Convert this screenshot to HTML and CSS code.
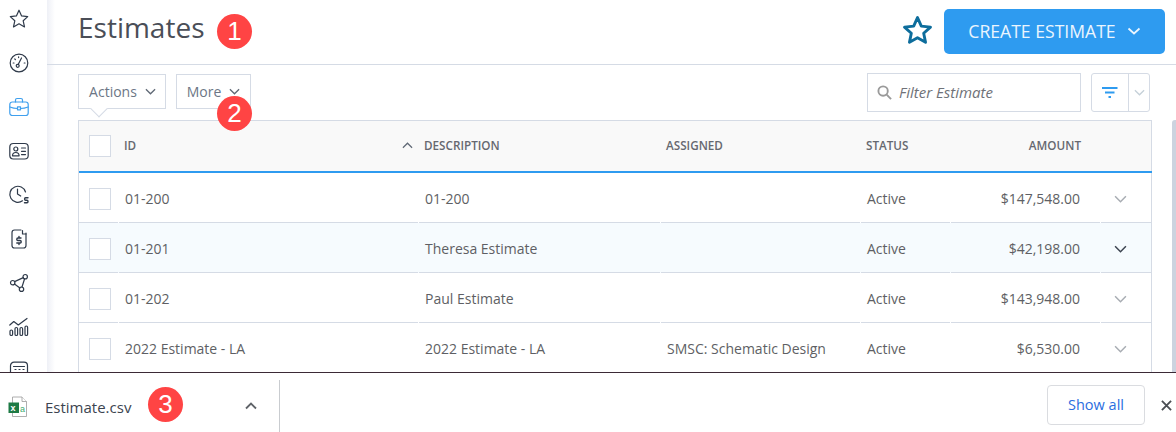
FILE: index.html
```html
<!DOCTYPE html>
<html lang="en">
<head>
<meta charset="utf-8">
<title>Estimates</title>
<link rel="stylesheet" href="styles.css">
</head>
<body>
<div class="app">
  <nav class="sidebar">
    <svg class="nav-icon" viewBox="0 0 20 20"><path d="M10 1.200l2.600 5.700 6.100.7-4.500 4.200 1.300 6.100-5.500-3.100-5.500 3.100 1.300-6.100-4.500-4.200 6.100-.7z"/></svg>
    <svg class="nav-icon" viewBox="0 0 20 20"><circle cx="10" cy="10" r="8.800"/><path d="M9.300 11.300l3.200-6.300"/><circle cx="8.700" cy="12.800" r="1.500"/><path d="M4.200 10h.8M5.800 6l.6.6M9.600 3.800v.8M15.200 10h.8"/></svg>
    <svg class="nav-icon active" viewBox="0 0 20 20"><rect x=".8" y="5" width="18.400" height="13.500" rx="2.500"/><path d="M6.500 5V3q0-1.500 1.500-1.500h4q1.500 0 1.500 1.500v2M.8 10q4 1.500 7.700 1.500M19.200 10q-4 1.500-7.700 1.500"/><rect x="8.500" y="9.800" width="3" height="3"/></svg>
    <svg class="nav-icon" viewBox="0 0 20 20"><rect x=".8" y="2.500" width="18.400" height="15.500" rx="3.500"/><circle cx="6.800" cy="8" r="2"/><path d="M3.500 14.800q0-3.300 3.300-3.300t3.300 3.300zM12.500 7H16.500M12.500 10.300H16.500M12.500 13.600H16.500"/></svg>
    <svg class="nav-icon" viewBox="0 0 20 20"><path d="M13.500 15.800A8 8 0 1 1 16.500 7"/><path d="M8.500 4v5l3.200 2"/><path class="heavy" d="M19 12.800h-2.400q-1 0-1 1.200t1 1.200h1.400q1 0 1 1.300t-1 1.300h-2.500"/></svg>
    <svg class="nav-icon" viewBox="0 0 20 20"><path d="M12 1H5.500Q3 1 3 3.500v13Q3 19 5.500 19h9q2.500 0 2.500-2.500V4"/><path d="M13.500 1.500v3.500h3.500"/><path class="heavy" d="M12 9H9q-1.200 0-1.200 1.300T9 11.500h2q1.200 0 1.200 1.300T11 14H7.800M10 7.500v1.500M10 14v1.500"/></svg>
    <svg class="nav-icon" viewBox="0 0 20 20"><circle cx="3.700" cy="9.700" r="2.200"/><circle cx="16.200" cy="3.700" r="2.200"/><circle cx="12.500" cy="16.200" r="2.200"/><path d="M5.600 8.600l8.700-4M5.500 11l5.400 3.900M15.600 5.800l-2.600 8.200"/></svg>
    <svg class="nav-icon" viewBox="0 0 20 20"><path d="M.8 8l4-3.500 4.500 3.500L18 1.500"/><rect x="1" y="13" width="2.600" height="5.500" rx="1.300"/><rect x="6" y="10.500" width="2.600" height="8" rx="1.300"/><rect x="11" y="10.500" width="2.600" height="8" rx="1.300"/><rect x="16" y="9" width="2.600" height="9.500" rx="1.300"/></svg>
    <svg class="nav-icon" viewBox="0 0 20 20"><rect x="1.500" y="1.200" width="17" height="18" rx="3.500"/><path d="M4.500 5.500h11M6 8.500h1M10 8.500h1M14 8.500h1"/></svg>
  </nav>
  <main class="content">
    <header class="page-head">
      <h1>Estimates</h1>
      <svg class="fav" viewBox="0 0 32 32"><path d="M16 3.500l3.700 8.200 8.900 1-6.600 6 1.800 8.800-7.800-4.500-7.800 4.500 1.800-8.800-6.600-6 8.900-1z"/></svg>
      <button class="create">CREATE ESTIMATE
        <svg class="chev-white" viewBox="0 0 14 8"><path d="M1.500 1.500L7 6.500l5.500-5"/></svg>
      </button>
    </header>
    <div class="toolbar">
      <button class="drop actions">Actions <svg class="chev" viewBox="0 0 12 7"><path d="M1 1l5 5 5-5"/></svg></button>
      <button class="drop more">More <svg class="chev" viewBox="0 0 12 7"><path d="M1 1l5 5 5-5"/></svg></button>
      <div class="filter">
        <svg class="search" viewBox="0 0 16 16"><circle cx="6.500" cy="6.500" r="5"/><path d="M10.300 10.300L15 15"/></svg>
        <span class="filter-text">Filter Estimate</span>
      </div>
      <div class="filter-btn">
        <span class="fb-main"><svg class="funnel" viewBox="0 0 16 12"><path d="M0 1h15.500M3 5.500h9.500M6.500 10h2.500"/></svg></span>
        <span class="fb-side"><svg class="chev pale" viewBox="0 0 12 7"><path d="M1 1l5 5 5-5"/></svg></span>
      </div>
    </div>
    <div class="table-wrap">
      <div class="table">
        <div class="row head">
          <div class="cell"><span class="box"></span></div>
          <div class="cell id">ID<svg class="sort" viewBox="0 0 12 7"><path d="M1 6l5-5 5 5"/></svg></div>
          <div class="cell">DESCRIPTION</div>
          <div class="cell">ASSIGNED</div>
          <div class="cell">STATUS</div>
          <div class="cell right">AMOUNT</div>
          <div class="cell"></div>
        </div>
        <div class="row">
          <div class="cell"><span class="box"></span></div>
          <div class="cell">01-200</div>
          <div class="cell">01-200</div>
          <div class="cell"></div>
          <div class="cell">Active</div>
          <div class="cell right">$147,548.00</div>
          <div class="cell expand"><svg class="chev" viewBox="0 0 12 7"><path d="M1 1l5 5 5-5"/></svg></div>
        </div>
        <div class="row hover">
          <div class="cell"><span class="box"></span></div>
          <div class="cell">01-201</div>
          <div class="cell">Theresa Estimate</div>
          <div class="cell"></div>
          <div class="cell">Active</div>
          <div class="cell right">$42,198.00</div>
          <div class="cell expand"><svg class="chev" viewBox="0 0 12 7"><path d="M1 1l5 5 5-5"/></svg></div>
        </div>
        <div class="row">
          <div class="cell"><span class="box"></span></div>
          <div class="cell">01-202</div>
          <div class="cell">Paul Estimate</div>
          <div class="cell"></div>
          <div class="cell">Active</div>
          <div class="cell right">$143,948.00</div>
          <div class="cell expand"><svg class="chev" viewBox="0 0 12 7"><path d="M1 1l5 5 5-5"/></svg></div>
        </div>
        <div class="row">
          <div class="cell"><span class="box"></span></div>
          <div class="cell">2022 Estimate - LA</div>
          <div class="cell">2022 Estimate - LA</div>
          <div class="cell">SMSC: Schematic Design</div>
          <div class="cell">Active</div>
          <div class="cell right">$6,530.00</div>
          <div class="cell expand"><svg class="chev" viewBox="0 0 12 7"><path d="M1 1l5 5 5-5"/></svg></div>
        </div>
      </div>
      <div class="scrollbar"></div>
    </div>
  </main>
  <footer class="downloads">
    <svg class="xls" viewBox="0 0 20 22"><path class="page" d="M4.500 1H14l4.500 4.500V20.500H4.500z"/><path class="page" d="M14 1v4.500h4.500"/><rect class="xgreen" x="0.500" y="6.500" width="10.500" height="10.500"/><text class="xl" x="2.600" y="15">x</text><text class="xa" x="12" y="15.500">a</text></svg>
    <span class="fname">Estimate.csv</span>
    <svg class="up" viewBox="0 0 12 8"><path d="M1 6.500l5-5 5 5"/></svg>
    <span class="divider"></span>
    <button class="show-all">Show all</button>
    <svg class="close" viewBox="0 0 12 12"><path d="M1 1l10 10M11 1L1 11"/></svg>
  </footer>
  <span class="badge b1">1</span>
  <span class="badge b2">2</span>
  <span class="badge b3">3</span>
</div>
</body>
</html>
```
FILE: styles.css
```css
* { box-sizing: border-box; }
html, body { margin: 0; padding: 0; }
body { width: 1176px; height: 432px; overflow: hidden; background: #fff; font-family: "Open Sans", sans-serif; color: #5a5f69; }
button { font-family: inherit; cursor: pointer; }
.app { position: relative; width: 1176px; height: 432px; display: grid; grid-template-columns: 47px 1fr; grid-template-rows: 372px 60px; }

.sidebar { grid-row: 1; grid-column: 1; display: flex; flex-direction: column; align-items: center; gap: 24px; padding: 9px 9px 0 0; overflow: hidden; background: #fff; }
.nav-icon { flex: none; width: 20px; height: 20px; fill: none; stroke: #2f3a4a; stroke-width: 1.200; stroke-linejoin: round; stroke-linecap: round; overflow: visible; }
.nav-icon.active { stroke: #3fa0ee; }
.heavy { stroke-width: 1.400; }

.content { grid-row: 1; grid-column: 2; min-width: 0; overflow: hidden; display: flex; flex-direction: column; background: linear-gradient(90deg, #eef0f6 0, #fff 8px); }
.page-head { height: 65px; flex: none; display: flex; align-items: center; padding: 0 11px 10px 31px; border-bottom: 1px solid #d5dbe5; }
.page-head h1 { margin: 0; flex: 1; font-size: 28px; font-weight: 400; line-height: 36px; color: #4a4e57; }
.fav { width: 33px; height: 33px; margin: 6px 10px 0 0; fill: none; stroke: #0d6d9c; stroke-width: 2.800; stroke-linejoin: round; }
.create { width: 221px; height: 45px; margin-top: 8px; border: 0; border-radius: 5px; background: #2e9bf0; color: #eaf5fe; font-size: 17.600px; display: flex; align-items: center; justify-content: center; gap: 11px; padding: 0; }
.chev-white { width: 14px; height: 8px; fill: none; stroke: #eaf5fe; stroke-width: 1.800; }

.toolbar { height: 55px; flex: none; display: flex; align-items: flex-start; padding: 9px 0 0 31px; }
.drop { position: relative; height: 35px; border: 1px solid #d5dbe5; background: #fff; color: #6c7686; font-size: 14px; padding: 0; display: flex; align-items: center; justify-content: center; gap: 8px; }
.actions { width: 88px; margin-right: 10px; padding-left: 1px; }
.actions::after { content: ""; position: absolute; left: 14px; bottom: -7px; width: 11px; height: 11px; background: #fff; border-right: 1px solid #d5dbe5; border-bottom: 1px solid #d5dbe5; transform: rotate(45deg); }
.more { width: 75px; }
.chev { width: 11px; height: 7px; fill: none; stroke: #5f6875; stroke-width: 1.400; }
.chev.pale { stroke: #c5d0d8; }
.filter { margin: -1px 0 0 auto; width: 214px; height: 39px; border: 1px solid #d5dbe5; display: flex; align-items: center; gap: 7px; padding-left: 9px; font-size: 15px; font-style: italic; color: #6f7278; }
.filter-text { margin-bottom: 2px; }
.search { width: 15px; height: 15px; fill: none; stroke: #9a9a9a; stroke-width: 2; }
.filter-btn { width: 59px; height: 39px; margin: -1px 26px 0 10px; border: 1px solid #d5dbe5; border-radius: 3px; display: flex; }
.fb-main { width: 37px; display: flex; align-items: center; justify-content: center; border-right: 1px solid #d5dbe5; }
.fb-side { flex: 1; display: flex; align-items: center; justify-content: center; }
.funnel { width: 16px; height: 12px; fill: none; stroke: #2e9bf0; stroke-width: 2; }

.table-wrap { flex: 1; min-height: 0; display: flex; padding-left: 31px; }
.table { width: 1074px; flex: none; border: 1px solid #d5dbe5; border-bottom: 0; font-size: 14px; color: #5e5f64; }
.row { display: grid; grid-template-columns: 39px 299px 241px 199px 89px 149px 50px; column-gap: 1px; height: 50px; }
.row.hover { background: #f6fbfe; }
.cell { display: flex; align-items: center; padding: 2px 0 0 6px; border-bottom: 1px solid #d5dbe5; min-width: 0; white-space: nowrap; }
.cell:first-child { padding-left: 10px; }
.right { justify-content: flex-end; padding: 2px 20px 0 0; }
.box { width: 22px; height: 22px; border: 1px solid #d5dbe5; background: #fff; }
.expand { justify-content: flex-start; padding: 2px 0 0 13px; }
.expand .chev { width: 13px; height: 8px; stroke: #a8adb3; }
.hover .expand .chev { stroke: #3c4450; }

.head { height: 52px; background: #f9f9f9; font-size: 11.700px; font-weight: 600; color: #666870; }
.head .cell { padding: 0 0 2px 5px; border-bottom: 2px solid #2e9bf0; }
.head .cell:first-child { padding: 0 0 0 10px; }
.head .right { padding: 0 20px 2px 0; }
.head .cell:nth-child(n) { margin-right: -1px; }
.head .id { justify-content: space-between; padding-right: 6px; }
.sort { width: 11px; height: 7px; fill: none; stroke: #5f6875; stroke-width: 1.300; }

.scrollbar { flex: none; width: 4px; height: 260px; margin-left: 20px; background: #ccd3df; border-radius: 3px 0 0 0; }

.downloads { grid-row: 2; grid-column: 1 / 3; display: flex; align-items: center; padding-top: 8px; background: #fff; border-top: 1px solid #3b2a36; position: relative; }
.xls { width: 20px; height: 22px; margin: 0 0 0 8px; flex: none; }
.page { fill: #fff; stroke: #9a9a9a; stroke-width: .8; }
.xgreen { fill: #1d7a45; }
.xl { font: 700 9px "Liberation Sans", sans-serif; fill: #fff; }
.xa { font: 400 9px "Liberation Sans", sans-serif; fill: #3bab6e; }
.fname { margin-left: 17px; font-size: 15px; color: #3c4450; width: 200px; flex: none; }
.up { width: 12px; height: 8px; fill: none; stroke: #5f6368; stroke-width: 1.800; flex: none; margin: 0 0 1px 0; }
.divider { width: 1px; height: 52px; background: #c9ccd0; margin: -1px 0 0 22px; align-self: flex-start; }
.show-all { margin: -4px 0 0 auto; width: 98px; height: 40px; background: #fff; border: 1px solid #dadce0; border-radius: 4px; color: #2a6ee0; font-size: 14.500px; padding: 0; }
.close { width: 11px; height: 11px; margin: -2px 4px 0 16px; fill: none; stroke: #4a4e53; stroke-width: 2; flex: none; }

.badge { position: absolute; width: 35px; height: 35px; border-radius: 50%; background: #ff4444; color: #fff; font-family: "Liberation Sans", sans-serif; font-size: 26px; line-height: 35px; text-align: center; }
.b1 { left: 217px; top: 14px; }
.b2 { left: 217px; top: 96px; }
.b3 { left: 148px; top: 387px; }
```
